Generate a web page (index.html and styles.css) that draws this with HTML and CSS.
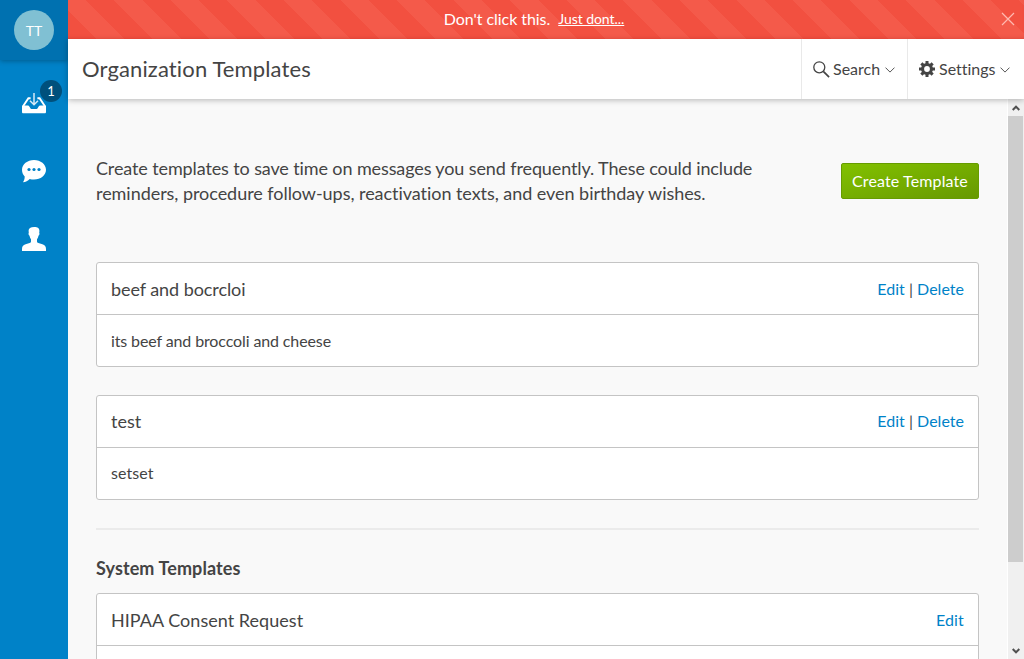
FILE: index.html
```html
<!DOCTYPE html>
<html lang="en">
<head>
<meta charset="utf-8">
<title>Organization Templates</title>
<link rel="stylesheet" href="styles.css">
</head>
<body>
<div class="app">
  <nav class="sidebar">
    <div class="profile"><div class="avatar">TT</div></div>
    <a class="nav-item">
      <svg width="24" height="22" viewBox="0 0 24 22"><path fill="#fff" d="M0 13.600h5.500c1.200 0 1.700.5 2.300 1.600.6 1.300 1.200 1.900 2.400 1.900h3.600c1.200 0 1.800-.6 2.400-1.900.6-1.100 1.100-1.600 2.300-1.600H24v6.400c0 .8-.5 1.300-1.300 1.300H1.300C.5 21.300 0 20.800 0 20z"/><path d="M8.600 6.200H6.400L1.200 14M15.400 6.200h2.200l5.200 7.800" fill="none" stroke="#fff" stroke-width="1.900"/><path d="M12 1v11.500M8 8.800l4 4 4-4" fill="none" stroke="#d5eaf6" stroke-width="1.500"/></svg>
      <span class="badge">1</span>
    </a>
    <a class="nav-item">
      <svg width="24" height="23" viewBox="0 0 24 23"><path fill="#fff" d="M12 0c6.600 0 12 4.300 12 9.800s-5.400 9.800-12 9.800c-1.500 0-3-.2-4.300-.6C6 21 3.600 22 1 22.300c1-1.400 1.700-3.200 1.700-5.700C1 14.700 0 12.400 0 9.800 0 4.300 5.400 0 12 0z"/><g fill="#0082c8"><circle cx="7" cy="9.500" r="1.600"/><circle cx="12" cy="9.500" r="1.600"/><circle cx="17" cy="9.500" r="1.600"/></g></svg>
    </a>
    <a class="nav-item">
      <svg width="24" height="24" viewBox="0 0 24 24"><path fill="#fff" d="M12.300 0c3.300 0 5.300 1.200 5.100 4.300l-.2 1.600c.6.300.3 2-.7 2.800-.3 1.500-.8 2.600-1.500 3.600v2.200c0 .8.500 1.200 1.400 1.500l4 1.300c2.500.8 3.600 2.400 3.600 4.700v2H0v-2c0-2.300 1.100-3.900 3.600-4.700l4-1.300c.9-.3 1.400-.7 1.400-1.500v-2.200c-.7-1-1.200-2.100-1.500-3.600-1-.8-1.300-2.500-.7-2.800l-.2-2.100C6.500 1.500 8.500 0 12.300 0z"/></svg>
    </a>
  </nav>
  <div class="main">
    <div class="banner">
      <span>Don't click this.</span><a class="banner-link">Just dont...</a>
      <svg class="close" width="14" height="14" viewBox="0 0 14 14"><path d="M1 1l12 12M13 1L1 13" stroke="#ffb9b0" stroke-width="1.200"/></svg>
    </div>
    <header class="header">
      <h1 class="title">Organization Templates</h1>
      <a class="tool search">
        <svg width="17" height="17" viewBox="0 0 17 17" fill="none" stroke="#444"><circle cx="6.300" cy="6.300" r="5.500" stroke-width="1.300"/><path d="M10.300 10.300l5.800 5.800" stroke-width="1.700"/></svg>
        <span class="tool-label">Search</span>
        <svg class="caret" width="10" height="6" viewBox="0 0 10 6"><path d="M.5.600L5 5.100 9.500.6" fill="none" stroke="#555"/></svg>
      </a>
      <a class="tool settings">
        <svg width="16" height="16" viewBox="0 0 16 16"><g fill="#444"><path d="M6.500 0h3v16h-3zM0 6.500h16v3H0z"/><path d="M6.500 0h3v16h-3zM0 6.500h16v3H0z" transform="rotate(45 8 8)"/><circle cx="8" cy="8" r="6"/></g><circle cx="8" cy="8" r="2.900" fill="#fff"/></svg>
        <span class="tool-label">Settings</span>
        <svg class="caret" width="10" height="6" viewBox="0 0 10 6"><path d="M.5.600L5 5.100 9.500.6" fill="none" stroke="#555"/></svg>
      </a>
    </header>
    <div class="body">
      <main class="content">
        <section class="intro">
          <p class="intro-text"><span class="tight">Create templates to save time on messages you send frequently. These could include</span> reminders, procedure follow-ups, reactivation texts, and even birthday wishes.</p>
          <button class="create">Create Template</button>
        </section>
        <article class="card">
          <div class="card-head"><h2 class="card-title">beef and bocrcloi</h2><div class="actions"><a>Edit</a> | <a>Delete</a></div></div>
          <div class="card-text">its beef and broccoli and cheese</div>
        </article>
        <article class="card raised">
          <div class="card-head"><h2 class="card-title">test</h2><div class="actions"><a>Edit</a> | <a>Delete</a></div></div>
          <div class="card-text">setset</div>
        </article>
        <hr class="divider">
        <h3 class="section-title">System Templates</h3>
        <article class="card system">
          <div class="card-head"><h2 class="card-title">HIPAA Consent Request</h2><div class="actions"><a>Edit</a></div></div>
          <div class="card-text"></div>
        </article>
      </main>
      <div class="scrollbar">
        <div class="arrow"><svg width="8" height="6" viewBox="0 0 8 6"><path d="M.7 5L4 1.700 7.300 5" fill="none" stroke="#505050" stroke-width="2"/></svg></div>
        <div class="thumb"></div>
        <div class="arrow arrow-down"><svg width="8" height="6" viewBox="0 0 8 6"><path d="M.7 1L4 4.300 7.300 1" fill="none" stroke="#505050" stroke-width="2"/></svg></div>
      </div>
    </div>
  </div>
</div>
</body>
</html>
```
FILE: styles.css
```css
* { box-sizing: border-box; }
body { margin: 0; font: 16px/24px Lato, "Liberation Sans", sans-serif; font-variant-ligatures: none; color: #444; background: #f9f9f9; }
svg { display: block; flex: none; }
h1, h2, h3, p { margin: 0; font-weight: 400; }
.app { display: flex; height: 659px; overflow: hidden; }

.sidebar { width: 68px; flex: none; background: #0082c8; }
.profile { height: 60px; padding: 10px 14px; background: #0071b0; box-shadow: 0 1px 5px rgba(0,0,0,.3); }
.avatar { width: 40px; height: 40px; border-radius: 50%; background: #80c0d3; color: #fff; font-size: 14px; line-height: 41px; text-align: center; }
.nav-item { position: relative; display: flex; justify-content: center; align-items: center; height: 68px; }
.nav-item:nth-child(2) { margin-top: 9px; }
.badge { position: absolute; left: 40px; top: 11px; width: 22px; height: 22px; border-radius: 50%; background: #00507c; color: #fff; font-size: 13px; line-height: 23px; text-align: center; }

.main { flex: 1; min-width: 0; display: flex; flex-direction: column; }
.banner { position: relative; z-index: 1; flex: none; height: 39px; display: flex; align-items: center; justify-content: center; gap: 8px; color: #fff; padding: 0 24px 1px 0; letter-spacing: -.05px;
  background: repeating-linear-gradient(45deg, #f25040 0, #f25040 20px, #f45a4a 20px, #f45a4a 40px);
  box-shadow: inset 0 -3px 4px -3px rgba(120,0,0,.25); }
.banner-link { font-size: 14px; text-decoration: underline; }
.close { position: absolute; right: 9px; top: 12px; }
.header { position: relative; flex: none; display: flex; height: 60px; background: #fff; box-shadow: 0 1px 6px rgba(0,0,0,.28); }
.title { flex: 1; padding-left: 14px; font-size: 22px; line-height: 60px; letter-spacing: .13px; }
.tool { display: flex; align-items: center; border-left: 1px solid #e9e9e9; }
.search { width: 106px; padding-left: 11px; }
.search .tool-label { margin-left: 3px; }
.settings { width: 117px; padding-left: 11px; }
.tool-label { margin: 0 5px 0 4px; }
.settings .tool-label { margin-right: 4px; }
.caret { margin-top: 2px; }

.body { flex: 1; min-height: 0; display: flex; overflow: hidden; }
.content { flex: 1; padding: 57px 28px 0; }
.intro { display: flex; justify-content: space-between; margin-bottom: 56px; height: 50px; }
.intro-text { width: 680px; font-size: 18px; line-height: 25px; letter-spacing: -.045px; }
.tight { letter-spacing: -.115px; }
.create { width: 138px; height: 36px; margin-top: 7px; padding: 0 0 2px; border: 1px solid #669c00; border-radius: 2px; color: #fff; font: 16px Lato, sans-serif; letter-spacing: .12px; background: linear-gradient(165deg, #82c100, #679900); }
.card { margin-bottom: 28px; border: 1px solid #c4c4c4; border-radius: 3px; background: #fff; }
.card-head { display: flex; justify-content: space-between; height: 52px; padding: 0 14px; line-height: 52px; border-bottom: 1px solid #c4c4c4; }
.card-title { font-size: 18px; letter-spacing: -.07px; }
.raised .card-title, .system .card-title { letter-spacing: .03px; }
.actions { letter-spacing: .02px; }
.system .actions { letter-spacing: .15px; }
.actions a { color: #0082c8; }
.card-text { height: 51px; padding: 0 14px; line-height: 52px; letter-spacing: -.12px; }
.raised .card-head, .raised .card-text { line-height: 50px; }
.raised .card-text { letter-spacing: .08px; }
.divider { height: 2px; margin: 0 0 26px; border: 0; background: #ebebeb; }
.section-title { margin-bottom: 13px; font-size: 18px; line-height: 24px; font-weight: 700; letter-spacing: .1px; }
.scrollbar { width: 17px; flex: none; display: flex; flex-direction: column; background: #f0f0f0; border-left: 1px solid #fff; }
.arrow { height: 17px; flex: none; display: flex; align-items: center; justify-content: center; }
.arrow-down { margin-top: auto; }
.thumb { width: 15px; height: 446px; background: #cdcdcd; }
```
